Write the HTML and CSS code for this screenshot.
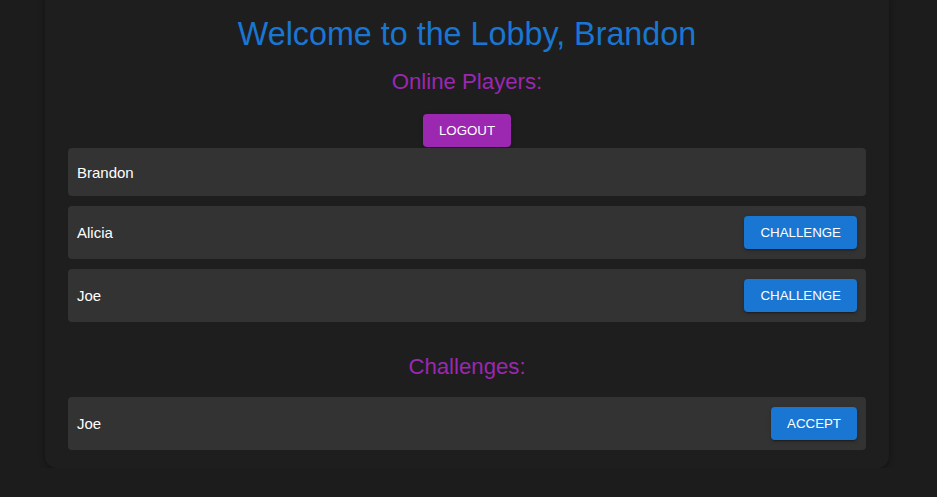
FILE: index.html
```html
<!DOCTYPE html>
<html lang="en">
<head>
<meta charset="utf-8">
<title>Lobby</title>
<link rel="stylesheet" href="styles.css">
</head>
<body>
<main class="card">
  <h1 class="title">Welcome to the Lobby, Brandon</h1>
  <h2 class="subtitle">Online Players:</h2>
  <div class="logout-wrap"><button class="btn btn-purple">Logout</button></div>
  <ul class="list">
    <li class="row row-plain"><span class="name">Brandon</span></li>
    <li class="row"><span class="name">Alicia</span><button class="btn btn-blue">Challenge</button></li>
    <li class="row"><span class="name">Joe</span><button class="btn btn-blue">Challenge</button></li>
  </ul>
  <h2 class="subtitle subtitle-challenges">Challenges:</h2>
  <ul class="list">
    <li class="row"><span class="name">Joe</span><button class="btn btn-blue">Accept</button></li>
  </ul>
</main>
</body>
</html>
```
FILE: styles.css
```css
html, body {
  margin: 0;
  padding: 0;
  background: #1c1c1c;
  font-family: "Liberation Sans", Arial, sans-serif;
}
.card {
  width: 844px;
  box-sizing: border-box;
  margin: -12px 0 0 45px;
  padding: 28px 23px 18px;
  background: #1e1e1e;
  border-radius: 12px;
  box-shadow: 0 2px 6px rgba(0,0,0,0.35);
}
.title {
  margin: 0;
  text-align: center;
  color: #1976d2;
  font-size: 32.3px;
  font-weight: 400;
  line-height: 36px;
}
.subtitle {
  margin: 17px 0 0;
  text-align: center;
  color: #9c27b0;
  font-size: 22.2px;
  font-weight: 400;
  line-height: 26px;
}
.subtitle-challenges {
  margin: 32px 0 17px;
}
.logout-wrap {
  display: flex;
  justify-content: center;
  margin-top: 19px;
  margin-bottom: 1px;
}
.list {
  list-style: none;
  margin: 0;
  padding: 0;
  display: flex;
  flex-direction: column;
  gap: 10px;
}
.row {
  display: flex;
  align-items: center;
  justify-content: space-between;
  height: 53px;
  box-sizing: border-box;
  padding: 0 9px;
  background: #333333;
  border-radius: 4px;
}
.row-plain {
  height: 48px;
}
.name {
  color: #ffffff;
  font-size: 15px;
}
.btn {
  height: 33px;
  padding: 0 16px;
  border: none;
  border-radius: 4px;
  color: #ffffff;
  font-family: "Liberation Sans", Arial, sans-serif;
  font-size: 13.3px;
  text-transform: uppercase;
  box-shadow: 0 3px 1px -2px rgba(0,0,0,0.2), 0 2px 2px 0 rgba(0,0,0,0.14), 0 1px 5px 0 rgba(0,0,0,0.12);
  cursor: pointer;
}
.btn-purple {
  background: #9c27b0;
}
.btn-blue {
  background: #1976d2;
}
```
